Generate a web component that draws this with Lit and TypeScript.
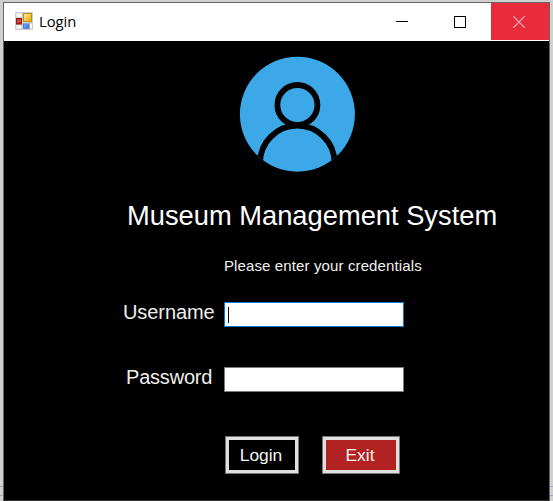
import { LitElement, html, css, svg } from "lit";
import { customElement, property } from "lit/decorators.js";

@customElement("user-avatar")
export class UserAvatar extends LitElement {
  static styles = css`
    :host { display: block; width: 117px; height: 117px; }
    svg { display: block; }
  `;
  render() {
    return html`<svg width="117" height="117" viewBox="0 0 117 117">
      <defs><clipPath id="disc"><circle cx="58.4" cy="58.2" r="57.5" /></clipPath></defs>
      <circle cx="58.4" cy="58.2" r="57.5" fill="#3ca8e8" />
      <g clip-path="url(#disc)" fill="none" stroke="#000" stroke-width="5.8">
        <circle cx="58.4" cy="49" r="20" />
        <path d="M21 112V107A37.2 37.2 0 0 1 95.6 107V112" />
      </g>
    </svg>`;
  }
}

@customElement("title-bar")
export class TitleBar extends LitElement {
  @property() caption = "";
  static styles = css`
    :host { display: flex; height: 38px; background: #fff; color: #000; }
    .icon { margin: 9px 0 0 11px; flex: none; }
    .caption { margin-left: 6px; font: 14.8px/37px "Open Sans", sans-serif; letter-spacing: -0.05px; flex: 1; }
    .control { width: 58px; height: 37px; display: flex; }
    .control svg { display: block; }
    .close { background: #e92c3c; }
  `;
  render() {
    const glyphs = [
      svg`<path d="M21 18.5h12" stroke="#000" />`,
      svg`<rect x="21.5" y="13.5" width="11" height="11" fill="none" stroke="#000" />`,
      svg`<path d="M22.3 13.3l11.4 11.4m0-11.4L22.3 24.7" stroke="#e5a0aa" stroke-width="1.3" />`,
    ];
    return html`
      <svg class="icon" width="18" height="18" viewBox="0 0 18 18">
        <defs>
          <linearGradient id="gold" x2="1" y2="1"><stop stop-color="#fff0a0" /><stop offset="1" stop-color="#e8a400" /></linearGradient>
          <linearGradient id="red" x2="0" y2="1"><stop stop-color="#a51c1c" /><stop offset=".5" stop-color="#d65a50" /><stop offset="1" stop-color="#9c1616" /></linearGradient>
          <linearGradient id="blue" x2="1" y2="1"><stop stop-color="#8db9ff" /><stop offset="1" stop-color="#2f66d0" /></linearGradient>
        </defs>
        <rect width="18" height="18" fill="#cfcfd2" />
        <path d="M1.5 1.5h5v3.5h-5zM1.5 13.5h5v3h-5zM15 12h2v4.5h-2z" fill="#fff" />
        <rect x="8.5" y="1.5" width="8" height="8" fill="url(#gold)" stroke="#c08c10" />
        <rect x="1.5" y="6.5" width="5" height="5.5" fill="url(#red)" stroke="#951c1c" />
        <rect x="8.5" y="12" width="5.5" height="4.3" fill="url(#blue)" stroke="#4b7cd6" />
      </svg>
      <span class="caption">${this.caption}</span>
      ${glyphs.map((g, i) => html`<span class="control ${i === 2 ? "close" : ""}"><svg width="58" height="37">${g}</svg></span>`)}
    `;
  }
}

@customElement("app-root")
export class AppRoot extends LitElement {
  static styles = css`
    :host {
      display: block; box-sizing: border-box; width: 553px; height: 501px; padding: 2px 3px 0;
      overflow: hidden; font-family: "Liberation Sans", Arial, sans-serif; color: #fff;
      background:
        linear-gradient(#a9a9b8, #a9a9b8) 0 486px / 100% 1px no-repeat,
        linear-gradient(#a9a9b8, #a9a9b8) 0 495px / 100% 1px no-repeat,
        #d0d0d0;
    }
    .window { box-sizing: border-box; width: 547px; height: 499px; border: 1px solid #666; border-bottom-color: #333; background: #000; }
    .form { display: flex; flex-direction: column; }
    user-avatar { margin: 15px 0 0 235px; }
    h1 { margin: 27px 0 0 123px; font-size: 27.3px; line-height: 32px; font-weight: 400; white-space: nowrap; }
    p { margin: 25px 0 0 220px; font-size: 15px; line-height: 18px; letter-spacing: 0.12px; color: #f0f0f0; white-space: nowrap; }
    .row { display: grid; grid-template-columns: 97px 180px; column-gap: 4px; margin-left: 119px; height: 26px; }
    .user { margin-top: 27px; }
    .pass { margin-top: 39px; }
    label { font-size: 20px; line-height: 20px; letter-spacing: -0.08px; color: #eee; }
    .pass label { padding-left: 3px; letter-spacing: -0.2px; }
    .field { box-sizing: border-box; height: 25px; border: 1px solid #7a7a7a; background: #fff; display: flex; }
    .focused { border-color: #0878d7; }
    .caret { width: 1px; height: 16px; margin: 4px 0 0 3px; background: #000; }
    .actions { display: flex; gap: 23px; margin: 43px 0 0 221px; }
    button {
      box-sizing: border-box; width: 74px; height: 38px; padding: 0 2px 0 0;
      border: 4px solid #e0e0e0; outline: 1px solid #777; outline-offset: -1px;
      background: #000; color: #f4f4f4; font: 17.4px/30px "Liberation Sans", Arial, sans-serif;
    }
    .exit { width: 78px; background: #b22222; }
  `;
  render() {
    return html`<div class="window">
      <title-bar caption="Login"></title-bar>
      <div class="form">
        <user-avatar></user-avatar>
        <h1>Museum Management System</h1>
        <p>Please enter your credentials</p>
        <div class="row user"><label>Username</label><div class="field focused"><span class="caret"></span></div></div>
        <div class="row pass"><label>Password</label><div class="field"></div></div>
        <div class="actions"><button>Login</button><button class="exit">Exit</button></div>
      </div>
    </div>`;
  }
}
